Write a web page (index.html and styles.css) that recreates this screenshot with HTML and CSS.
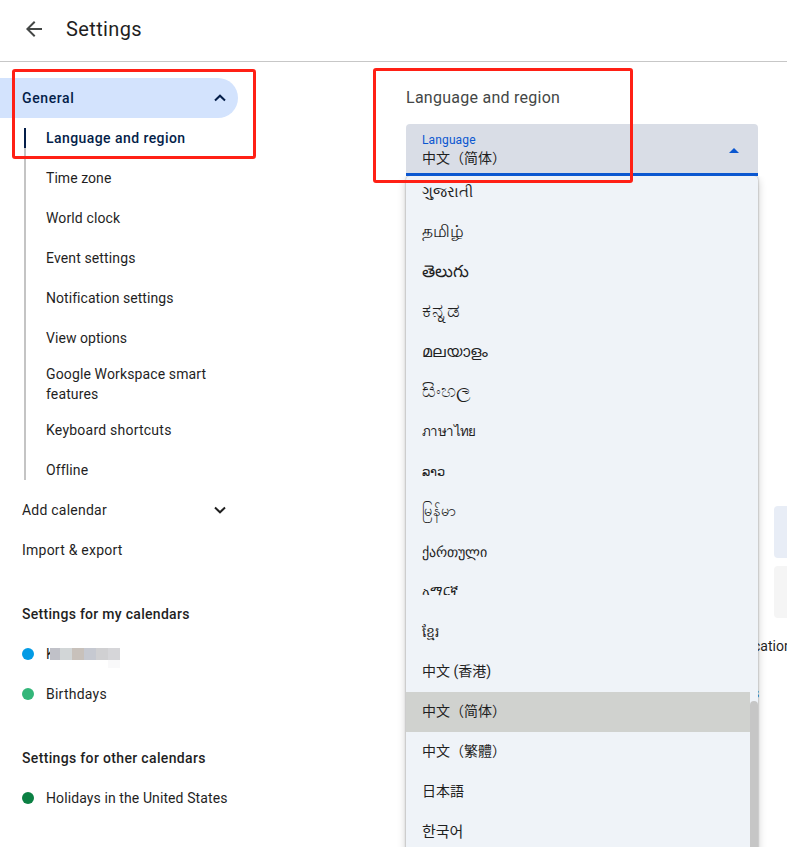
FILE: index.html
```html
<!DOCTYPE html>
<html lang="en">
<head>
<meta charset="utf-8">
<title>Settings</title>
<link rel="stylesheet" href="styles.css">
</head>
<body>
<div class="page">
  <header class="header">
    <svg class="back" viewBox="0 0 24 24"><path d="M20 11H7.83l5.59-5.59L12 4l-8 8 8 8 1.41-1.41L7.83 13H20v-2z"/></svg>
    <h1><span>Settings</span></h1>
  </header>
  <div class="content">
    <nav class="sidebar">
      <div class="general"><span>General</span>
        <svg class="chevron" viewBox="0 0 12 8"><path d="M1 6.5 6 1.7l5 4.8"/></svg>
      </div>
      <ul class="sections">
        <li class="current"><span>Language and region</span></li>
        <li class="snug"><span>Time zone</span></li>
        <li><span>World clock</span></li>
        <li><span>Event settings</span></li>
        <li class="snug"><span>Notification settings</span></li>
        <li class="snug"><span>View options</span></li>
        <li class="tall"><span>Google Workspace smart<br>features</span></li>
        <li class="loose"><span>Keyboard shortcuts</span></li>
        <li><span>Offline</span></li>
      </ul>
      <div class="row loose"><span>Add calendar</span>
        <svg class="chevron" viewBox="0 0 12 8"><path d="m1 1.5 5 4.8 5-4.8"/></svg>
      </div>
      <div class="row loose"><span>Import &amp; export</span></div>
      <h2><span>Settings for my calendars</span></h2>
      <div class="calendar"><i class="dot blue"></i><span class="masked">K<span class="mosaic"><i></i><i></i><i></i><i></i><i></i><i></i></span></span></div>
      <div class="calendar loose"><i class="dot mint"></i><span>Birthdays</span></div>
      <h2 class="others"><span>Settings for other calendars</span></h2>
      <div class="calendar"><i class="dot green"></i><span class="holidays">Holidays in the United States</span></div>
    </nav>
    <main class="main">
      <h3><span>Language and region</span></h3>
      <div class="select">
        <div class="value"><span class="label">Language</span><span class="chosen" lang="zh-CN">中文（简体）</span></div>
        <i class="caret"></i>
      </div>
      <div class="backdrop">
        <div class="field tinted"></div>
        <div class="field"></div>
        <div class="fragment">cation</div>
        <div class="fragment link">s</div>
      </div>
      <div class="menu">
        <ul>
          <li lang="gu"><span>ગુજરાતી</span></li>
          <li lang="ta"><span>தமிழ்</span></li>
          <li lang="te"><span>తెలుగు</span></li>
          <li lang="kn"><span>ಕನ್ನಡ</span></li>
          <li lang="ml"><span>മലയാളം</span></li>
          <li lang="si"><span>සිංහල</span></li>
          <li lang="th"><span>ภาษาไทย</span></li>
          <li lang="lo"><span>ລາວ</span></li>
          <li lang="my"><span>မြန်မာ</span></li>
          <li lang="ka"><span>ქართული</span></li>
          <li lang="am"><span>አማርኛ</span></li>
          <li lang="km"><span>ខ្មែរ</span></li>
          <li lang="zh-HK"><span>中文 (香港)</span></li>
          <li lang="zh-CN" class="selected"><span>中文（简体）</span></li>
          <li lang="zh-TW"><span>中文（繁體）</span></li>
          <li lang="ja"><span>日本語</span></li>
          <li lang="ko"><span>한국어</span></li>
        </ul>
        <div class="track"><div class="thumb"></div></div>
      </div>
    </main>
  </div>
  <div class="callout first"></div>
  <div class="callout second"></div>
</div>
</body>
</html>
```
FILE: styles.css
```css
* { box-sizing: border-box; }
body { margin: 0; background: #fff; color: #1f1f1f; font: 14px/20px Roboto, "Noto Sans CJK SC", "Noto Sans", sans-serif; letter-spacing: .13px; }
ul { list-style: none; margin: 0; padding: 0; }
h1, h2, h3 { margin: 0; }
.page { position: relative; width: 787px; height: 847px; overflow: hidden; }
.snug { letter-spacing: .05px; }
.loose { letter-spacing: .23px; }
.holidays { letter-spacing: .1px; }
.header { display: flex; align-items: center; height: 62px; padding: 0 0 4px 22px; border-bottom: 1px solid #c7c7c7; }
.back { width: 24px; height: 24px; fill: #444746; }
h1 { margin-left: 20px; font-size: 20px; font-weight: 400; line-height: 28px; letter-spacing: .37px; }
.content { display: flex; }
.sidebar { width: 406px; padding-top: 16px; }
.general { display: flex; align-items: center; justify-content: space-between; width: 238px; height: 40px; padding: 0 12px 0 22px; border-radius: 0 20px 20px 0; background: #d3e3fd; color: #041e49; font-weight: 500; letter-spacing: .6px; }
.chevron { width: 12px; height: 8px; fill: none; stroke: currentColor; stroke-width: 2; }
.sections { position: relative; }
.sections::before { content: ""; position: absolute; left: 24px; top: 10px; bottom: 10px; width: 2px; background: #c4c4c4; }
.sections li { position: relative; display: flex; align-items: center; height: 40px; padding-left: 46px; }
.sections li.tall { height: 52px; }
.sections .current { color: #041e49; font-weight: 500; letter-spacing: .43px; }
.sections .current::before { content: ""; position: absolute; left: 24px; top: 10px; width: 2px; height: 20px; background: #041e49; }
.row { display: flex; align-items: center; justify-content: space-between; width: 238px; height: 40px; padding: 0 12px 0 22px; }
h2 { padding: 34px 0 10px 22px; font-size: 14px; line-height: 20px; font-weight: 500; letter-spacing: .29px; }
.others { letter-spacing: .34px; }
.calendar { display: flex; align-items: center; height: 40px; padding-left: 22px; gap: 12px; }
.dot { width: 12px; height: 12px; border-radius: 50%; }
.blue { background: #039be5; }
.mint { background: #33b679; }
.green { background: #0b8043; }
.masked { position: relative; }
.mosaic { position: absolute; left: 4px; top: 4px; display: flex; width: 70px; height: 12px; }
.mosaic i { flex: 0 0 12px; }
.mosaic i:nth-child(1) { flex-basis: 10px; background: #c0c1c8; }
.mosaic i:nth-child(2) { background: #d2d6d7; }
.mosaic i:nth-child(3) { background: #c8c1bb; }
.mosaic i:nth-child(4) { background: #c6c9d1; }
.mosaic i:nth-child(5) { background: #d0d0d2; }
.mosaic i:nth-child(6) { background: #d6d6d9; box-shadow: 0 8px #f9f9fa; }
.main { position: relative; width: 381px; padding-top: 26px; }
h3 { font-size: 16px; line-height: 20px; font-weight: 400; color: #444746; letter-spacing: .26px; }
.select { display: flex; align-items: center; justify-content: space-between; width: 352px; height: 52px; margin-top: 16px; padding: 0 19px 0 16px; background: #d9dde6; border-bottom: 3px solid #0b57d0; border-radius: 4px 4px 0 0; }
.value { display: flex; flex-direction: column; align-self: flex-start; padding-top: 8px; }
.label { font-size: 12px; line-height: 16px; color: #0b57d0; }
.chosen { line-height: 20px; letter-spacing: 0; }
.caret { border: 5px solid transparent; border-top: 0; border-bottom-color: #0b57d0; margin-top: 3px; }
.menu { position: relative; display: flex; width: 352px; height: 687px; background: #eff3f8; border-radius: 4px 4px 0 0; box-shadow: 0 0 2px rgba(0,0,0,.4), 0 3px 8px rgba(0,0,0,.22); clip-path: inset(0 -14px 0 -14px); }
.menu ul { width: 344px; margin-top: -4px; }
.menu li { height: 40px; padding: 10px 16px; letter-spacing: 0; white-space: nowrap; }
.menu li:lang(gu) { font-size: 14.6px; }
.menu li:lang(ta) { font-size: 17px; padding-top: 9px; }
.menu li:lang(te) { font-size: 17px; padding-top: 9px; }
.menu li:lang(kn) { font-size: 20px; padding-top: 8px; letter-spacing: 1.2px; }
.menu li:lang(ml) { font-size: 16px; }
.menu li:lang(si) { font-size: 18.5px; padding-top: 9px; }
.menu li:lang(th) { font-size: 13.4px; letter-spacing: -.6px; }
.menu li:lang(lo) { font-size: 13.4px; }
.menu li:lang(my) { font-size: 14.5px; }
.menu li:lang(ka) { font-size: 14.4px; padding-top: 11px; }
.menu li:lang(am) { font-size: 13.4px; padding-top: 9px; }
.menu li:lang(zh-HK), .menu li:lang(zh-TW) { font-family: Roboto, "Noto Sans CJK TC", sans-serif; padding-top: 9px; }
.menu li:lang(zh-CN) { padding-top: 9px; }
.menu li:lang(ja) { font-family: Roboto, "Noto Sans CJK JP", sans-serif; padding-top: 9px; }
.menu li:lang(ko) { font-family: Roboto, "Noto Sans CJK KR", sans-serif; font-size: 15px; }
.menu .selected { background: #d0d2cf; }
.track { width: 8px; padding-top: 525px; }
.thumb { height: 162px; background: #c6c6c6; border-radius: 4px 4px 0 0; }
.backdrop { position: absolute; left: 340px; top: 444px; width: 41px; }
.field { height: 52px; margin: 0 0 8px 28px; border-radius: 4px 0 0 4px; background: #f5f5f5; }
.field.tinted { background: #e8edf6; }
.fragment { margin: 18px 0 0 7px; line-height: 20px; white-space: nowrap; letter-spacing: 0; }
.link { margin: 27px 0 0 6px; color: #0b57d0; }
.callout { position: absolute; border: 3px solid #ff2015; border-radius: 3px; }
.first { left: 12px; top: 69px; width: 244px; height: 90px; }
.second { left: 373px; top: 68px; width: 260px; height: 115px; }
```
